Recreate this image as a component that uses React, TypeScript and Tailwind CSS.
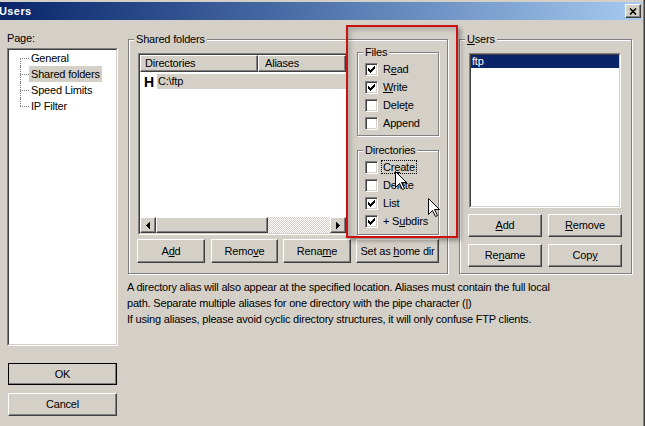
import React from 'react';

const raised =
  'border border-t-white border-l-white border-r-[#404040] border-b-[#404040] shadow-[inset_-1px_-1px_0_#808080]';
const sunkenOuter = 'border border-t-[#808080] border-l-[#808080] border-r-white border-b-white';
const sunkenInner = 'border border-t-[#404040] border-l-[#404040] border-r-[#d4d0c8] border-b-[#d4d0c8]';

const U = ({ children }: { children: React.ReactNode }) => <span className="underline">{children}</span>;

function Button({ children, className = '' }: { children: React.ReactNode; className?: string }) {
  return (
    <button type="button" className={`flex items-center justify-center bg-[#d4d0c8] ${raised} ${className}`}>
      <span>{children}</span>
    </button>
  );
}

function GroupBox({ label, className = '', children }: { label: React.ReactNode; className?: string; children?: React.ReactNode }) {
  return (
    <div className={`relative border border-[#808080] shadow-[inset_1px_1px_0_#fff,1px_1px_0_#fff] ${className}`}>
      <span className="absolute -top-[7px] left-[5px] px-[2px] leading-[13px] bg-[#d4d0c8]">{label}</span>
      {children}
    </div>
  );
}

function CheckBox({ checked, children }: { checked?: boolean; children: React.ReactNode }) {
  return (
    <div className="flex items-center h-[18px]">
      <span className={`w-[13px] h-[13px] bg-white flex items-center justify-center ${sunkenOuter} shadow-[inset_1px_1px_0_#404040,inset_-1px_-1px_0_#d4d0c8]`}>
        {checked && (
          <svg width="7" height="7" viewBox="0 0 7 7" shapeRendering="crispEdges">
            <path d="M0 2h1v3h-1z M1 3h1v3h-1z M2 4h1v3h-1z M3 3h1v3h-1z M4 2h1v3h-1z M5 1h1v3h-1z M6 0h1v3h-1z" fill="#000" />
          </svg>
        )}
      </span>
      {children}
    </div>
  );
}

function Cursor({ className }: { className: string }) {
  return (
    <svg className={className} width="13" height="20" viewBox="0 0 13 20">
      <path d="M0.5 0.5V16.5L4.5 12.5L7.5 18.5L9.5 17.5L6.5 11.5H11.5Z" fill="#fff" stroke="#000" strokeWidth="1" />
    </svg>
  );
}

function Arrow({ dir }: { dir: 'left' | 'right' }) {
  return (
    <span className={`w-[16px] h-[16px] flex items-center justify-center bg-[#d4d0c8] ${raised}`}>
      <svg width="4" height="7" viewBox="0 0 4 7" shapeRendering="crispEdges">
        {dir === 'left' ? <path d="M0 3.5L4 0V7Z" fill="#000" /> : <path d="M4 3.5L0 0V7Z" fill="#000" />}
      </svg>
    </span>
  );
}

const pages = ['General', 'Shared folders', 'Speed Limits', 'IP Filter'];

export default function App() {
  return (
    <div className="relative w-[645px] h-[426px] overflow-hidden bg-[#d4d0c8] text-[11px] leading-[13px] text-black font-['Liberation_Sans',Arial,sans-serif] tracking-[-0.2px] shadow-[inset_-1px_0_0_#404040,inset_-2px_0_0_#808080]">
      {/* title bar */}
      <div className="pt-[2px] h-[20px] pr-[3px]">
        <div className="h-[18px] flex items-center justify-between bg-linear-to-r from-[#0a246a] to-[#a6caf0]">
          <span className="-ml-[1px] mt-[1px] text-white font-bold tracking-[0.4px]">Users</span>
          <button type="button" className={`mr-[1px] w-[16px] h-[14px] flex items-center justify-center bg-[#d4d0c8] ${raised}`}>
            <svg width="8" height="7" viewBox="0 0 8 7">
              <path d="M1 0.5L7 6.5M7 0.5L1 6.5" stroke="#000" strokeWidth="1.6" />
            </svg>
          </button>
        </div>
      </div>

      <div className="flex">
        {/* left column */}
        <div className="ml-[7px] w-[111px] flex flex-col">
          <div className="mt-[12px]">Page:</div>
          <div className={`mt-[3px] h-[298px] ${sunkenOuter}`}>
            <div className={`h-full bg-white pl-[11px] ${sunkenInner}`}>
              {pages.map((p, i) => (
                <div key={p} className="flex h-[16px]">
                  <span className="flex flex-col w-[9px]">
                    <span className={`h-[8px] ${i > 0 ? 'border-l border-dotted border-[#808080]' : ''}`} />
                    <span className={`flex-1 border-t border-dotted border-[#808080] ${i < pages.length - 1 ? 'border-l' : ''}`} />
                  </span>
                  <span className={`px-[2px] flex items-center ${i === 1 ? 'bg-[#d4d0c8]' : ''}`}>{p}</span>
                </div>
              ))}
            </div>
          </div>
          <Button className="mt-[17px] ml-[1px] w-[109px] h-[22px] outline outline-1 outline-black -outline-offset-1">OK</Button>
          <Button className="mt-[8px] ml-[1px] w-[109px] h-[23px]">Cancel</Button>
        </div>

        {/* main column */}
        <div className="ml-[10px] flex flex-col">
          <div className="mt-[19px] flex gap-[11px]">
            <GroupBox label="Shared folders" className="w-[320px] h-[235px] pt-[12px] pl-[9px]">
              <div className="flex">
                <div className={`mt-[1px] w-[210px] h-[182px] ${sunkenOuter}`}>
                  <div className={`h-full bg-white flex flex-col ${sunkenInner}`}>
                    <div className="flex h-[17px]">
                      <span className={`w-[118px] pl-[4px] flex items-center bg-[#d4d0c8] ${raised}`}>Directories</span>
                      <span className={`flex-1 pl-[6px] flex items-center bg-[#d4d0c8] ${raised}`}>Aliases</span>
                    </div>
                    <div className="mt-[2px] h-[15px] flex items-center pl-[4px]">
                      <span className="w-[10px] text-[14px] leading-none font-bold">H</span>
                      <span className="ml-[3px] pl-[1px] flex-1 h-full flex items-center bg-[#d4d0c8]">C:\ftp</span>
                    </div>
                    <div className="mt-auto h-[16px] flex">
                      <Arrow dir="left" />
                      <span className={`w-[112px] bg-[#d4d0c8] ${raised}`} />
                      <span className="flex-1 bg-[image:repeating-conic-gradient(#fff_0%_25%,#d4d0c8_0%_50%)] bg-[length:2px_2px]" />
                      <Arrow dir="right" />
                    </div>
                  </div>
                </div>
                <div className="ml-[9px] flex flex-col">
                  <GroupBox label="Files" className="w-[82px] h-[84px] pt-[7px] pl-[7px]">
                    <CheckBox checked>
                      <span className="ml-[5px]">R<U>e</U>ad</span>
                    </CheckBox>
                    <CheckBox checked>
                      <span className="ml-[5px]"><U>W</U>rite</span>
                    </CheckBox>
                    <CheckBox>
                      <span className="ml-[5px]">Dele<U>t</U>e</span>
                    </CheckBox>
                    <CheckBox>
                      <span className="ml-[5px]">Append</span>
                    </CheckBox>
                  </GroupBox>
                  <GroupBox label="Directories" className="mt-[14px] w-[82px] h-[85px] pt-[7px] pl-[7px]">
                    <CheckBox>
                      <span className="ml-[3px] px-[1px] border border-dotted border-black leading-[12px]">Cr<U>e</U>ate</span>
                    </CheckBox>
                    <CheckBox>
                      <span className="ml-[5px]">Delete</span>
                    </CheckBox>
                    <CheckBox checked>
                      <span className="ml-[5px]">List</span>
                    </CheckBox>
                    <CheckBox checked>
                      <span className="ml-[5px]">+ S<U>u</U>bdirs</span>
                    </CheckBox>
                  </GroupBox>
                </div>
              </div>
              <div className="mt-[4px] flex">
                <Button className="-ml-[1px] w-[68px] h-[24px]">A<U>d</U>d</Button>
                <Button className="ml-[6px] w-[67px] h-[24px]">Remo<U>v</U>e</Button>
                <Button className="ml-[5px] w-[68px] h-[24px]">Rena<U>m</U>e</Button>
                <Button className="ml-[5px] w-[83px] h-[24px]">Set as <U>h</U>ome dir</Button>
              </div>
            </GroupBox>

            <GroupBox label={<><U>U</U>sers</>} className="w-[173px] h-[235px] pt-[13px] pl-[8px]">
              <div className={`ml-[1px] w-[152px] h-[155px] ${sunkenOuter}`}>
                <div className={`h-full bg-white ${sunkenInner}`}>
                  <div className="h-[13px] pl-[1px] flex items-center bg-[#0a246a] text-white">ftp</div>
                </div>
              </div>
              <div className="mt-[6px] grid grid-cols-[74px_74px] gap-x-[6px] gap-y-[7px]">
                <Button className="h-[23px]"><U>A</U>dd</Button>
                <Button className="h-[23px]"><U>R</U>emove</Button>
                <Button className="h-[23px]">Re<U>n</U>ame</Button>
                <Button className="h-[23px]">Cop<U>y</U></Button>
              </div>
            </GroupBox>
          </div>

          <div className="mt-[5px] -ml-[1px] leading-[16px]">
            <p>
              A directory alias will also appear at the specified location. Aliases must contain the full local
              <br />
              path. Separate multiple aliases for one directory with the pipe character (|)
            </p>
            <p>If using aliases, please avoid cyclic directory structures, it will only confuse FTP clients.</p>
          </div>
        </div>
      </div>

      {/* annotation overlay */}
      <div className="absolute left-[346px] top-[25px] w-[112px] h-[213px] border-2 border-[#cc1111] shadow-[3px_3px_4px_rgba(0,0,0,0.3),inset_3px_3px_5px_rgba(0,0,0,0.18)] pointer-events-none" />
      <Cursor className="absolute left-[395px] top-[171px]" />
      <Cursor className="absolute left-[428px] top-[198px]" />
    </div>
  );
}
